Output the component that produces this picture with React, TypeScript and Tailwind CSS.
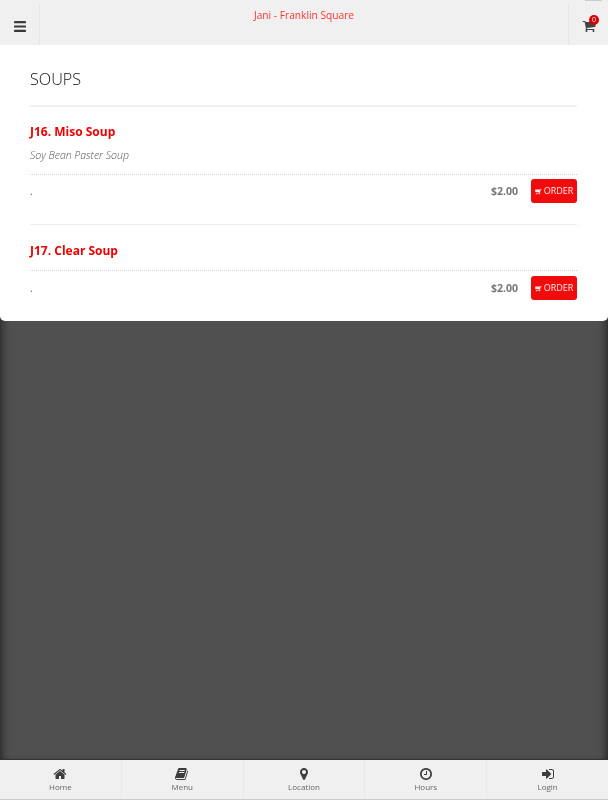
import type { ReactNode } from "react";

// font-awesome 4 outlines, the react-icons set only has the 5 redraws
const CART_PATH =
  "M704 1536q0 52-38 90t-90 38-90-38-38-90 38-90 90-38 90 38 38 90zm896 0q0 52-38 90t-90 38-90-38-38-90 38-90 90-38 90 38 38 90zm128-1088v512q0 24-16.5 43.5t-40.5 20.5l-1044 122q13 60 13 70 0 16-24 64h920q26 0 45 19t19 45-19 45-45 19h-1024q-26 0-45-19t-19-45q0-11 8-31.5t16-36 21.5-40 15.5-29.5l-177-823h-204q-26 0-45-19t-19-45 19-45 45-19h256q16 0 28.5 6.5t19.5 15.5 13 24.5 8 26 5.5 29.5 4.5 26h1201q26 0 45 19t19 45z";
const BOOK_PATH =
  "M1639 478q40 57 18 129l-275 906q-19 64-76.5 107.5t-122.5 43.5h-923q-77 0-148.5-53.5t-99.5-131.5q-24-67-2-127 0-4 3-27t4-37q1-8-3-21.5t-3-19.5q2-11 8-21t16.5-23.5 16.5-23.5q23-38 45-91.5t30-91.5q3-10 .5-30t-.5-28q3-11 17-28t17-23q21-36 42-92t25-90q1-9-2.5-32t.5-28q4-13 22-30.5t22-22.5q19-26 42.5-84.5t27.5-96.5q1-8-3-25.5t-2-26.5q2-8 9-18t18-23 17-21q8-12 16.5-30.5t15-35 16-36 19.5-32 26.5-23.5 36-11.5 47.5 5.5l-1 3q38-9 51-9h761q74 0 114 56t18 130l-274 906q-36 119-71.5 153.5t-128.5 34.5h-869q-27 0-38 15-11 16-1 43 24 70 144 70h923q29 0 56-15.5t35-41.5l300-987q7-22 5-57 38 15 59 43zm-1064 2q-4 13 2 22.5t20 9.5h608q13 0 25.5-9.5t16.5-22.5l21-64q4-13-2-22.5t-20-9.5h-608q-13 0-25.5 9.5t-16.5 22.5zm-83 256q-4 13 2 22.5t20 9.5h608q13 0 25.5-9.5t16.5-22.5l21-64q4-13-2-22.5t-20-9.5h-608q-13 0-25.5 9.5t-16.5 22.5z";
const HOME_PATH =
  "M1472 992v480q0 26-19 45t-45 19h-384v-384h-256v384h-384q-26 0-45-19t-19-45v-480q0-1 .5-3t.5-3l575-474 575 474q1 2 1 6zm223-69l-62 74q-8 9-21 11h-3q-13 0-21-7l-692-577-692 577q-12 8-24 7-13-2-21-11l-62-74q-8-10-7-23.5t11-21.5l719-599q32-26 76-26t76 26l244 204v-195q0-14 9-23t23-9h192q14 0 23 9t9 23v408l219 182q10 8 11 21.5t-7 23.5z";
const MARKER_PATH =
  "M1152 640q0-106-75-181t-181-75-181 75-75 181 75 181 181 75 181-75 75-181zm256 0q0 109-33 179l-364 774q-16 33-47.5 52t-67.5 19-67.5-19-46.5-52l-365-774q-33-70-33-179 0-212 150-362t362-150 362 150 150 362z";
const CLOCK_PATH =
  "M1024 544v448q0 14-9 23t-23 9h-320q-14 0-23-9t-9-23v-64q0-14 9-23t23-9h224v-352q0-14 9-23t23-9h64q14 0 23 9t9 23zm416 352q0-148-73-273t-198-198-273-73-273 73-198 198-73 273 73 273 198 198 273 73 273-73 198-198 73-273zm224 0q0 209-103 385.5t-279.5 279.5-385.5 103-385.5-103-279.5-279.5-103-385.5 103-385.5 279.5-279.5 385.5-103 385.5 103 279.5 279.5 103 385.5z";
const SIGN_IN_PATH =
  "M1312 896q0 26-19 45l-544 544q-19 19-45 19t-45-19-19-45v-288h-448q-26 0-45-19t-19-45v-384q0-26 19-45t45-19h448v-288q0-26 19-45t45-19 45 19l544 544q19 19 19 45zm352-352v704q0 119-84.5 203.5t-203.5 84.5h-320q-13 0-22.5-9.5t-9.5-22.5q0-4-1-20t-.5-26.5 3-23.5 10-19.5 20.5-6.5h320q66 0 113-47t47-113v-704q0-66-47-113t-113-47h-312q-13 0-22.5-9.5t-9.5-22.5q0-4-1-20t-.5-26.5 3-23.5 10-19.5 20.5-6.5h320q119 0 203.5 84.5t84.5 203.5z";

function FaIcon({ path, className }: { path: string; className: string }) {
  return (
    <svg viewBox="0 0 1792 1792" fill="currentColor" className={className}>
      <path d={path} />
    </svg>
  );
}

interface MenuItemProps {
  name: string;
  description?: string;
  price: string;
}

function MenuItem({ name, description, price }: MenuItemProps) {
  return (
    <article>
      <h3 className="text-[12px] leading-[18px] font-bold text-[#ee0000]">{name}</h3>
      {description ? (
        <p className="mt-[7px] text-[10.5px] leading-[14px] font-light italic text-[#555555]">{description}</p>
      ) : null}
      <div
        className={`flex items-center border-t border-dotted border-[#d4d4d4] ${
          description ? "mt-[12px] pt-[4px]" : "mt-[10px] pt-[5px]"
        }`}
      >
        <span className="text-[10px] text-[#666666]">.</span>
        <span className="ml-auto pt-[1px] text-[10.5px] font-bold text-[#777777]">{price}</span>
        <button className="ml-[13px] flex h-[24px] w-[46px] items-center justify-center gap-[2px] rounded-[3px] bg-[#f00c0c] text-[9px] text-[#ffecec]">
          <FaIcon path={CART_PATH} className="h-[7px] w-[7px] -scale-x-100" />
          ORDER
        </button>
      </div>
    </article>
  );
}

function NavItem({ icon, label }: { icon: ReactNode; label: string }) {
  return (
    <div className="flex flex-1 flex-col items-center border-r border-[#e8e8e8] pt-[8px] last:border-r-0">
      <span className="flex h-[12px] items-center text-[#3d3d3d]">{icon}</span>
      <span className="mt-[1px] text-[8px] leading-[12px] text-[#666666]">{label}</span>
    </div>
  );
}

export default function App() {
  return (
    <div className="flex h-screen flex-col bg-[#505050] font-['Open_Sans',sans-serif] will-change-transform">
      <header className="relative flex h-[45px] shrink-0 bg-[#f0f0f0] pt-[4px]">
        <span className="absolute right-[6px] top-0 h-[1px] w-[17px] bg-[#cccccc]" />
        <div className="flex w-[40px] items-center justify-center border-r border-[#e6e6e6] pt-[3px]">
          <svg viewBox="0 0 12 11" fill="#3a3a3a" className="h-[11px] w-[12px]">
            <rect width="12" height="2.2" rx="0.4" />
            <rect y="4.4" width="12" height="2.2" rx="0.4" />
            <rect y="8.8" width="12" height="2.2" rx="0.4" />
          </svg>
        </div>
        <div className="flex-1 pt-[3px] text-center text-[10.2px] leading-[16px] text-[#ff3333]">Jani - Franklin Square</div>
        <div className="relative flex w-[40px] items-center justify-center border-l border-[#e6e6e6] pt-[3px]">
          <FaIcon path={CART_PATH} className="h-[14px] w-[14px] text-[#444444]" />
          <span className="absolute right-[9px] top-[11px] flex h-[10px] w-[10px] items-center justify-center rounded-full bg-[#dd0000] text-[7px] text-white">0</span>
        </div>
      </header>
      <main className="flex-1 overflow-hidden shadow-[inset_8px_0_8px_-6px_rgba(0,0,0,0.55),inset_-8px_0_8px_-6px_rgba(0,0,0,0.55)]">
        <section className="h-[276px] rounded-b-[5px] bg-white pl-[30px] pr-[31px]">
          <h2 className="h-[62px] border-b-2 border-[#f0f0f0] pt-[22px] text-[16.2px] leading-[24px] font-light text-[#111111]">SOUPS</h2>
          <div className="pt-[16px]">
            <div className="border-b border-[#eeeeee] pb-[21px]">
              <MenuItem name="J16. Miso Soup" description="Soy Bean Paster Soup" price="$2.00" />
            </div>
            <div className="pt-[17px]">
              <MenuItem name="J17. Clear Soup" price="$2.00" />
            </div>
          </div>
        </section>
      </main>
      <nav className="flex h-[41px] shrink-0 border-t border-b border-t-[#333333] border-b-[#cccccc] bg-[#f0f0f0]">
        <NavItem icon={<FaIcon path={HOME_PATH} className="h-[14px] w-[14px]" />} label="Home" />
        <NavItem icon={<FaIcon path={BOOK_PATH} className="h-[14px] w-[14px]" />} label="Menu" />
        <NavItem icon={<FaIcon path={MARKER_PATH} className="h-[14px] w-[14px]" />} label="Location" />
        <NavItem icon={<FaIcon path={CLOCK_PATH} className="h-[14px] w-[14px]" />} label="Hours" />
        <NavItem icon={<FaIcon path={SIGN_IN_PATH} className="h-[14px] w-[14px]" />} label="Login" />
      </nav>
    </div>
  );
}
